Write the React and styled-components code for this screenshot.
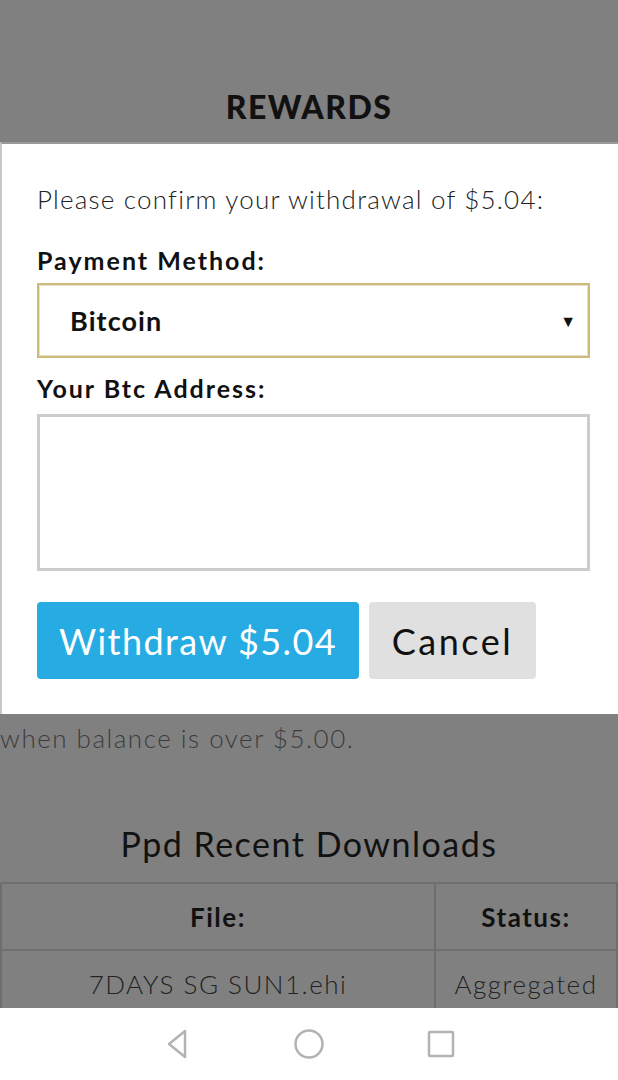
import styled, { createGlobalStyle } from "styled-components";

const Global = createGlobalStyle`
  html, body {
    margin: 0;
    padding: 0;
    background: #808080;
  }
  body {
    font-family: Lato, "Open Sans", sans-serif;
    color: #111;
  }
`;

const Screen = styled.div`
  width: 618px;
  height: 1080px;
  display: flex;
  flex-direction: column;
  background: #808080;
  overflow: hidden;
  & > * {
    flex-shrink: 0;
  }
`;

const Header = styled.div`
  height: 142px;
  display: flex;
  align-items: flex-end;
  justify-content: center;
  padding-bottom: 16px;
  box-sizing: border-box;
  h1 {
    margin: 0;
    font-size: 32px;
    font-weight: 900;
    letter-spacing: 1.4px;
    color: #111;
  }
`;

const Modal = styled.div`
  background: #fff;
  border-top: 2px solid #9a9a9a;
  border-left: 2px solid #c8c8c8;
  padding: 39px 28px 35px 35px;
  display: flex;
  flex-direction: column;
`;

const Intro = styled.p`
  margin: 0 0 30px;
  font-size: 26px;
  font-weight: 300;
  letter-spacing: 1.2px;
  color: #222;
`;

const Label = styled.div`
  font-size: 25px;
  font-weight: 700;
  letter-spacing: 2px;
  color: #111;
  margin-bottom: 8px;
`;

const Select = styled.div`
  height: 75px;
  box-sizing: border-box;
  border: 2px solid #cdb978;
  box-shadow: inset 0 0 0 1px #e6e0cc;
  display: flex;
  align-items: center;
  justify-content: space-between;
  padding: 0 12px 0 31px;
  margin-bottom: 15px;
  span {
    font-size: 27px;
    font-weight: 700;
    letter-spacing: 1.1px;
  }
  i {
    font-style: normal;
    font-size: 16px;
  }
`;

const TextArea = styled.div`
  height: 157px;
  box-sizing: border-box;
  border: 3px solid #cccccc;
  margin-top: 3px;
  margin-bottom: 31px;
`;

const Buttons = styled.div`
  display: flex;
  gap: 10px;
`;

const Button = styled.button`
  height: 77px;
  border: none;
  border-radius: 4px;
  font-family: inherit;
  font-size: 36px;
  font-weight: 400;
  padding: 0;
  letter-spacing: ${(p) => (p.$primary ? "1.4px" : "2.5px")};
  width: ${(p) => (p.$primary ? "322px" : "167px")};
  background: ${(p) => (p.$primary ? "#26ace3" : "#e0e0e0")};
  color: ${(p) => (p.$primary ? "#fff" : "#111")};
`;

const Note = styled.div`
  font-size: 26px;
  font-weight: 300;
  letter-spacing: 1.5px;
  color: #3c3c3c;
  white-space: nowrap;
  padding-top: 8px;
  height: 100px;
  box-sizing: border-box;
`;

const Title = styled.h2`
  margin: 0;
  text-align: center;
  font-size: 34px;
  line-height: 60px;
  font-weight: 400;
  letter-spacing: 1.5px;
  color: #111;
  padding-bottom: 8px;
`;

const Content = styled.div`
  flex: 1 1 auto !important;
  min-height: 0;
  overflow: hidden;
`;

const Table = styled.div`
  display: grid;
  grid-template-columns: 434px 1fr;
  border-top: 2px solid #6e6e6e;
  border-left: 2px solid #6e6e6e;
`;

const Cell = styled.div`
  height: 65px;
  display: flex;
  align-items: center;
  justify-content: center;
  border-right: 2px solid #6e6e6e;
  border-bottom: 2px solid #6e6e6e;
  font-size: 26px;
  letter-spacing: 1.5px;
  font-weight: ${(p) => (p.$head ? 700 : 300)};
  color: ${(p) => (p.$head ? "#111" : "#222")};
`;

const NavBar = styled.div`
  height: 72px;
  background: #fff;
  display: flex;
  align-items: center;
  justify-content: center;
  gap: 94px;
  padding-left: 0px;
`;

const NavIcon = styled.svg`
  width: 38px;
  height: 38px;
  stroke: #b3b3b3;
  stroke-width: 2.5;
  fill: none;
`;

export default function App() {
  return (
    <Screen>
      <Global />
      <Header>
        <h1>REWARDS</h1>
      </Header>
      <Modal>
        <Intro>Please confirm your withdrawal of $5.04:</Intro>
        <Label>Payment Method:</Label>
        <Select>
          <span>Bitcoin</span>
          <i>▼</i>
        </Select>
        <Label>Your Btc Address:</Label>
        <TextArea />
        <Buttons>
          <Button $primary>Withdraw $5.04</Button>
          <Button>Cancel</Button>
        </Buttons>
      </Modal>
      <Note>when balance is over $5.00.</Note>
      <Title>Ppd Recent Downloads</Title>
      <Content>
        <Table>
          <Cell $head>File:</Cell>
          <Cell $head>Status:</Cell>
          <Cell>7DAYS SG SUN1.ehi</Cell>
          <Cell>Aggregated</Cell>
        </Table>
      </Content>
      <NavBar>
        <NavIcon viewBox="0 0 38 38">
          <path d="M27 6 L11 19 L27 32 Z" strokeLinejoin="round" />
        </NavIcon>
        <NavIcon viewBox="0 0 38 38">
          <circle cx="19" cy="19" r="13.5" />
        </NavIcon>
        <NavIcon viewBox="0 0 38 38">
          <rect x="7" y="7" width="24" height="24" rx="1" />
        </NavIcon>
      </NavBar>
    </Screen>
  );
}
